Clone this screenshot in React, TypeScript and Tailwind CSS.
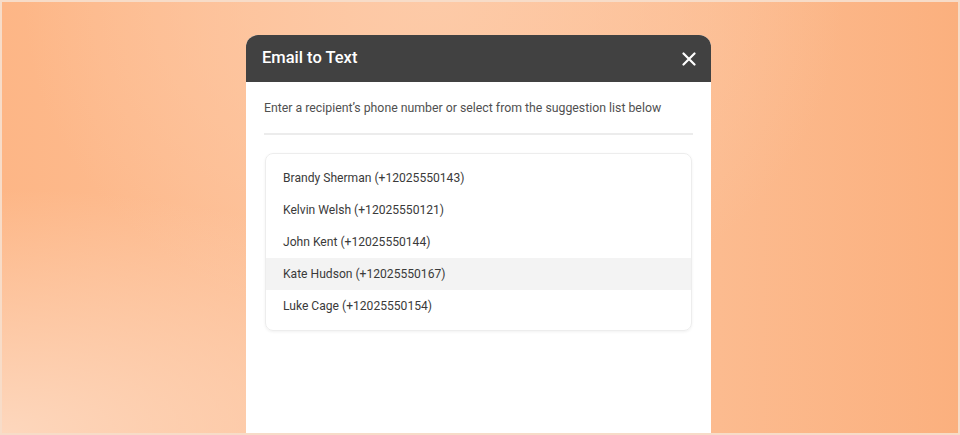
import React from 'react';

const contacts = [
  { name: 'Brandy Sherman', phone: '+12025550143' },
  { name: 'Kelvin Welsh', phone: '+12025550121' },
  { name: 'John Kent', phone: '+12025550144' },
  { name: 'Kate Hudson', phone: '+12025550167', active: true },
  { name: 'Luke Cage', phone: '+12025550154' },
];

export default function App() {
  return (
    <div
      className="w-[960px] h-[435px] overflow-hidden border-[2px] border-[#f7dcc8] bg-[image:radial-gradient(ellipse_at_0%_100%,#fdd7bd_0%,rgba(253,215,189,0)_40%),radial-gradient(ellipse_at_45%_0%,#fdcaa7_0%,rgba(253,202,167,0)_55%),linear-gradient(90deg,#fdb686_0%,#fdc29b_40%,#fcbb8f_75%,#fbb07e_100%)]"
      style={{ fontFamily: 'Roboto, "Liberation Sans", sans-serif' }}
    >
      <div className="ml-[244px] mt-[33px] w-[465px] h-[420px] flex flex-col bg-white rounded-t-[12px] overflow-hidden">
        <div className="h-[47px] shrink-0 bg-[#414141] flex items-center justify-between pl-[16px] pr-[15px]">
          <span className="text-white text-[16.5px] font-medium">Email to Text</span>
          <svg width="14" height="14" viewBox="0 0 14 14" fill="none">
            <path d="M1.5 1.5L12.5 12.5M12.5 1.5L1.5 12.5" stroke="white" strokeWidth="2.2" strokeLinecap="round" />
          </svg>
        </div>
        <div className="px-[18px] pt-[18px]">
          <p className="text-[12.3px] leading-[16px] text-[#505050]">
            Enter a recipient’s phone number or select from the suggestion list below
          </p>
          <div className="mt-[17px] h-[2px] bg-[#ececec]" />
          <div className="mt-[18px] mx-[1px] py-[8px] rounded-[8px] border border-[#ededed] shadow-[0_1px_3px_rgba(0,0,0,0.06)]">
            {contacts.map((c) => (
              <div
                key={c.phone}
                className={`h-[32px] flex items-center pl-[17px] text-[12.1px] text-[#3a3a3a] ${c.active ? 'bg-[#f3f3f3]' : ''}`}
              >
                {c.name} ({c.phone})
              </div>
            ))}
          </div>
        </div>
      </div>
    </div>
  );
}
